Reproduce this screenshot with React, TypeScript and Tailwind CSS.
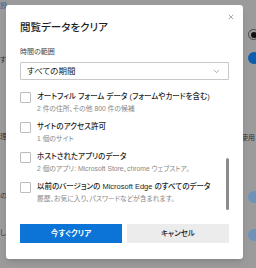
import { ChevronDown, X } from 'lucide-react'

const items = [
  { title: 'オートフィル フォーム データ (フォームやカードを含む)', sub: '2 件の住所、その他 800 件の候補' },
  { title: 'サイトのアクセス許可', sub: '1 個のサイト' },
  { title: 'ホストされたアプリのデータ', sub: '2 個のアプリ: Microsoft Store、chrome ウェブストア。' },
  { title: '以前のバージョンの Microsoft Edge のすべてのデータ', sub: '履歴、お気に入り、パスワードなどが含まれます。' },
]

const font = "font-['Liberation_Sans','Noto_Sans_CJK_JP',sans-serif] [font-feature-settings:'palt']"

const App = () => {
  return (
    <div className={`relative w-[256px] h-[268px] overflow-hidden bg-[#9b9b9b] ${font}`}>
      {/* dimmed settings page behind */}
      <div className="flex justify-between h-full">
        <div className="flex flex-col text-[7px] text-[#333] leading-none">
          <span className="mt-[2px] text-[#3b5f93]">設</span>
          <span className="mt-[47px]">する</span>
          <span className="mt-[70px]">理</span>
          <span className="mt-[52px]">の</span>
          <span className="mt-[30px]">し</span>
        </div>
        <div className="flex flex-col items-end w-[14px]">
          <div className="mt-[29px] w-[11px] h-[11px] rounded-full border border-[#444] flex items-center justify-center -mr-[3px]">
            <div className="w-[6px] h-[6px] rounded-full bg-[#111]" />
          </div>
          <div className="mt-[12px] w-[12px] h-[12px] rounded-full bg-[#0b5fb0] -mr-[4px]" />
          <span className="mt-[70px] text-[7px] leading-none text-[#333] whitespace-nowrap self-start -ml-[1px]">使用</span>
          <div className="mt-[50px] w-[12px] h-[12px] rounded-full bg-[#6f93b8] -mr-[4px]" />
          <div className="mt-[26px] w-[12px] h-[12px] rounded-full bg-[#6f93b8] -mr-[4px]" />
        </div>
      </div>

      {/* dialog */}
      <div className="absolute left-[6px] top-[5px] w-[237px] h-[254px] bg-white rounded-[3px] shadow-md flex flex-col px-[14px]">
        <div className="relative pt-[14px]">
          <h1 className="text-[10.5px] leading-[16px] text-[#1f1f1f] font-medium">閲覧データをクリア</h1>
          <X className="absolute right-[-6px] top-[8px] w-[8px] h-[8px] text-[#555]" strokeWidth={1.5} />
        </div>
        <div className="mt-[12px] text-[7px] leading-[10px] text-[#444]">時間の範囲</div>
        <div className="mt-[5px] h-[18px] border border-[#c8c8c8] rounded-[1px] flex items-center justify-between pl-[6px] pr-[7px]">
          <span className="text-[8.5px] text-[#222]">すべての期間</span>
          <ChevronDown className="w-[9px] h-[9px] text-[#666]" strokeWidth={1.5} />
        </div>
        <div className="flex mt-[12px]">
          <div className="flex-1 flex flex-col gap-[9px]">
            {items.map((it) => (
              <div key={it.title} className="flex gap-[6px]">
                <div className="w-[11px] h-[11px] border border-[#bdbdbd] rounded-[1px] shrink-0" />
                <div className="flex flex-col">
                  <span className="text-[7.5px] leading-[10px] text-[#1f1f1f] font-medium whitespace-nowrap">{it.title}</span>
                  <span className="mt-[3px] text-[6.8px] leading-[8px] text-[#888] whitespace-nowrap">{it.sub}</span>
                </div>
              </div>
            ))}
          </div>
          <div className="w-[3px] flex flex-col">
            <div className="mt-[66px] h-[52px] w-[3px] rounded-full bg-[#8c8c8c]" />
          </div>
        </div>
        <div className="mt-auto mb-[16px] flex gap-[5px]">
          <button className="flex-1 h-[19px] bg-[#0b74d6] text-white text-[7.5px] font-bold">今すぐクリア</button>
          <button className="flex-1 h-[19px] bg-[#ececec] text-[#222] text-[7.5px] font-medium">キャンセル</button>
        </div>
      </div>
    </div>
  )
}

export default App
